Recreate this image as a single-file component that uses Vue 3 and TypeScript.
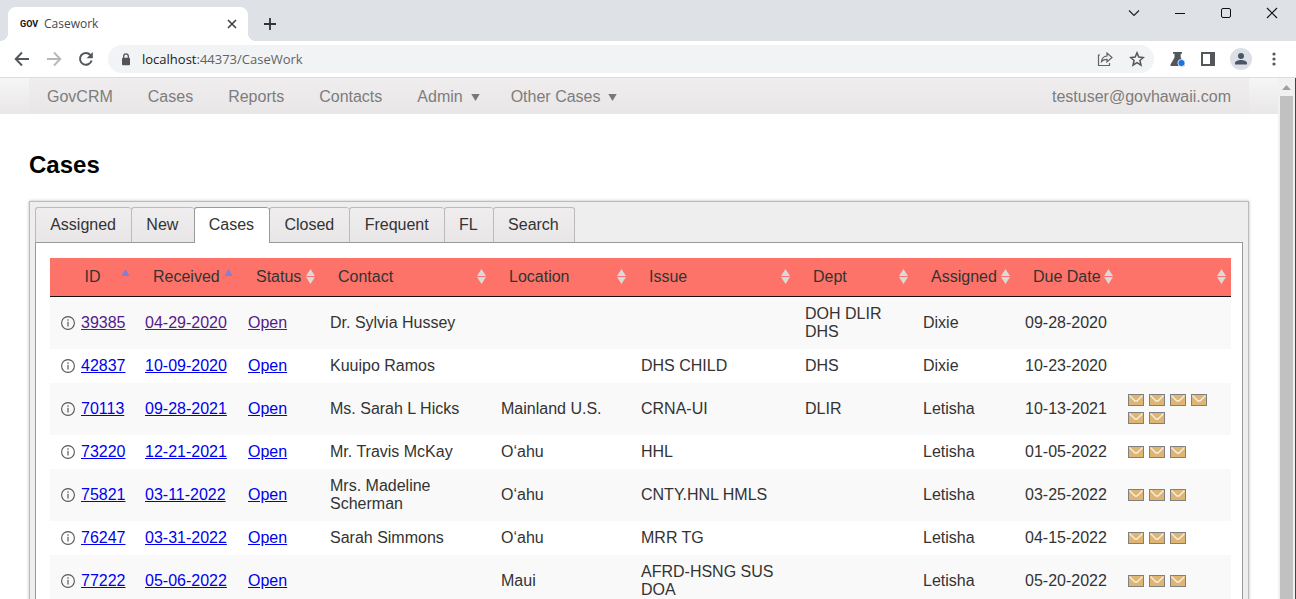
<script setup lang="ts">
import { ref } from 'vue'

interface CaseRow {
  id: string
  received: string
  visited?: boolean
  contact: string
  location: string
  issue: string
  dept: string
  assigned: string
  due: string
  mails: number
}

interface Column {
  label: string
  width: number
  sort: 'asc' | 'both'
  center?: boolean
}

const url = ref('localhost:44373/CaseWork')
const activeTab = ref('Cases')
const tabs: string[] = ['Assigned', 'New', 'Cases', 'Closed', 'Frequent', 'FL', 'Search']

const navItems: { label: string; menu?: boolean }[] = [
  { label: 'GovCRM' },
  { label: 'Cases' },
  { label: 'Reports' },
  { label: 'Contacts' },
  { label: 'Admin', menu: true },
  { label: 'Other Cases', menu: true },
]

const columns: Column[] = [
  { label: 'ID', width: 85, sort: 'asc', center: true },
  { label: 'Received', width: 103, sort: 'asc' },
  { label: 'Status', width: 82, sort: 'both' },
  { label: 'Contact', width: 171, sort: 'both' },
  { label: 'Location', width: 140, sort: 'both' },
  { label: 'Issue', width: 164, sort: 'both' },
  { label: 'Dept', width: 118, sort: 'both' },
  { label: 'Assigned', width: 102, sort: 'both' },
  { label: 'Due Date', width: 103, sort: 'both' },
  { label: '', width: 113, sort: 'both' },
]

const rows: CaseRow[] = [
  { id: '39385', received: '04-29-2020', visited: true, contact: 'Dr. Sylvia Hussey', location: '', issue: '', dept: 'DOH DLIR DHS', assigned: 'Dixie', due: '09-28-2020', mails: 0 },
  { id: '42837', received: '10-09-2020', contact: 'Kuuipo Ramos', location: '', issue: 'DHS CHILD', dept: 'DHS', assigned: 'Dixie', due: '10-23-2020', mails: 0 },
  { id: '70113', received: '09-28-2021', contact: 'Ms. Sarah L Hicks', location: 'Mainland U.S.', issue: 'CRNA-UI', dept: 'DLIR', assigned: 'Letisha', due: '10-13-2021', mails: 6 },
  { id: '73220', received: '12-21-2021', contact: 'Mr. Travis McKay', location: 'O‘ahu', issue: 'HHL', dept: '', assigned: 'Letisha', due: '01-05-2022', mails: 3 },
  { id: '75821', received: '03-11-2022', contact: 'Mrs. Madeline Scherman', location: 'O‘ahu', issue: 'CNTY.HNL HMLS', dept: '', assigned: 'Letisha', due: '03-25-2022', mails: 3 },
  { id: '76247', received: '03-31-2022', contact: 'Sarah Simmons', location: 'O‘ahu', issue: 'MRR TG', dept: '', assigned: 'Letisha', due: '04-15-2022', mails: 3 },
  { id: '77222', received: '05-06-2022', contact: '', location: 'Maui', issue: 'AFRD-HSNG SUS DOA', dept: '', assigned: 'Letisha', due: '05-20-2022', mails: 3 },
]
</script>

<template>
  <div class="window">
    <header class="titlebar">
      <div class="browser-tab">
        <span class="favicon">GOV</span>
        <span class="tab-title">Casework</span>
        <button class="icon-btn" aria-label="Close tab">
          <svg width="10" height="10" viewBox="0 0 10 10"><path d="M1 1l8 8M9 1l-8 8" stroke="#3c4043" stroke-width="1.6" /></svg>
        </button>
      </div>
      <button class="icon-btn new-tab" aria-label="New tab">
        <svg width="12" height="12" viewBox="0 0 12 12"><path d="M6 0v12M0 6h12" stroke="#303336" stroke-width="1.8" /></svg>
      </button>
      <div class="window-buttons">
        <button class="icon-btn" aria-label="Search tabs">
          <svg width="12" height="12" viewBox="0 0 12 12"><path d="M1 3.5l5 5 5-5" fill="none" stroke="#222" stroke-width="1.2" /></svg>
        </button>
        <button class="icon-btn" aria-label="Minimize">
          <svg width="12" height="12" viewBox="0 0 12 12"><path d="M1 6.5h10" stroke="#111" /></svg>
        </button>
        <button class="icon-btn" aria-label="Maximize">
          <svg width="12" height="12" viewBox="0 0 12 12"><rect x="1.5" y="1.5" width="9" height="9" rx="1.5" fill="none" stroke="#111" /></svg>
        </button>
        <button class="icon-btn" aria-label="Close">
          <svg width="12" height="12" viewBox="0 0 12 12"><path d="M1 1l10 10M11 1L1 11" stroke="#111" stroke-width="1.1" /></svg>
        </button>
      </div>
    </header>

    <div class="toolbar">
      <button class="icon-btn" aria-label="Back">
        <svg width="16" height="16" viewBox="0 0 16 16"><path d="M15 8H2M8 1.5L1.7 8 8 14.5" fill="none" stroke="#53575b" stroke-width="1.9" /></svg>
      </button>
      <button class="icon-btn" aria-label="Forward">
        <svg width="16" height="16" viewBox="0 0 16 16"><path d="M1 8h13M8 1.5L14.3 8 8 14.5" fill="none" stroke="#b6b8ba" stroke-width="1.9" /></svg>
      </button>
      <button class="icon-btn" aria-label="Reload">
        <svg width="16" height="16" viewBox="0 0 16 16"><path d="M13.6 9.4A5.9 5.9 0 1 1 12.4 4" fill="none" stroke="#53575b" stroke-width="2" /><path d="M14.8 1v6.2H8.6z" fill="#53575b" /></svg>
      </button>
      <div class="omnibox">
        <svg class="lock" width="10" height="13" viewBox="0 0 10 13"><rect x="1" y="4.8" width="8" height="7.4" rx="1" fill="#505458" /><path d="M2.7 5V3.2a2.3 2.3 0 0 1 4.6 0V5" fill="none" stroke="#505458" stroke-width="1.3" /></svg>
        <div class="address">
          <input v-model="url" class="address-input" aria-label="Address" type="text" />
          <div class="address-text" aria-hidden="true"><span class="host">localhost</span>:44373/CaseWork</div>
        </div>
        <button class="icon-btn" aria-label="Share">
          <svg width="16" height="16" viewBox="0 0 16 16"><path d="M3 4H1.500v10.500h11V12" fill="none" stroke="#5f6368" stroke-width="1.200" /><path d="M4.500 10.500c.4-3.400 2.100-5.300 5.500-5.500V2l5 4.500-5 4.500V8.300c-2.400-.1-4 .5-5.500 2.200z" fill="none" stroke="#5f6368" stroke-width="1.200" /></svg>
        </button>
        <button class="icon-btn" aria-label="Bookmark">
          <svg width="16" height="16" viewBox="0 0 16 16"><path d="M8 1.800l1.800 4.300 4.600.4-3.500 3 1.100 4.600L8 11.700l-4 2.400 1.100-4.600-3.500-3 4.600-.4z" fill="none" stroke="#53575b" stroke-width="1.500" /></svg>
        </button>
      </div>
      <div class="actions">
        <button class="icon-btn" aria-label="Experiments">
          <svg width="16" height="16" viewBox="0 0 16 16"><path d="M3 1h9v1.800h-1.300v3.700l4 7V15H.5v-1.500l4-7V2.800H3z" fill="#53575b" /><circle cx="11.500" cy="12" r="3.600" fill="#1a73e8" stroke="#fff" stroke-width=".8" /></svg>
        </button>
        <button class="icon-btn" aria-label="Side panel">
          <svg width="16" height="16" viewBox="0 0 16 16"><path d="M1 1h14v14H1zM3 3v10h7V3z" fill="#53575b" fill-rule="evenodd" /></svg>
        </button>
        <button class="icon-btn" aria-label="Profile">
          <svg width="22" height="22" viewBox="0 0 22 22"><circle cx="11" cy="11" r="11" fill="#dce0e6" /><circle cx="11" cy="8" r="3" fill="#4a5568" /><path d="M5 16.500v-1.500c0-2 3.500-3 6-3s6 1 6 3v1.500z" fill="#4a5568" /></svg>
        </button>
        <button class="icon-btn" aria-label="Menu">
          <svg width="16" height="16" viewBox="0 0 16 16"><g fill="#53575b"><circle cx="8" cy="3" r="1.600" /><circle cx="8" cy="8" r="1.600" /><circle cx="8" cy="13" r="1.600" /></g></svg>
        </button>
      </div>
    </div>

    <div class="viewport">
      <div class="page">
        <nav class="site-nav">
          <div class="nav-inner">
            <a v-for="item in navItems" :key="item.label" href="#" class="nav-link" :class="{ 'has-menu': item.menu }">
              {{ item.label }}
              <svg v-if="item.menu" class="caret" width="9" height="7" viewBox="0 0 9 7"><path d="M.3 0h8.400L4.500 7z" fill="#777" /></svg>
            </a>
            <a href="#" class="nav-link user">testuser@govhawaii.com</a>
          </div>
        </nav>

        <main class="content">
          <h1>Cases</h1>
          <section class="tab-box">
            <div class="tab-list" role="tablist">
              <button
                v-for="tab in tabs"
                :key="tab"
                role="tab"
                class="tab"
                :class="{ active: tab === activeTab }"
                :aria-selected="tab === activeTab"
                @click="activeTab = tab"
              >
                {{ tab }}
              </button>
            </div>
            <div class="panel" role="tabpanel">
              <table>
                <colgroup>
                  <col v-for="(col, i) in columns" :key="i" :style="{ width: col.width + 'px' }" />
                </colgroup>
                <thead>
                  <tr>
                    <th v-for="(col, i) in columns" :key="i" :class="{ center: col.center }" scope="col">
                      {{ col.label }}
                      <svg v-if="col.sort === 'asc'" class="sort" width="9" height="15" viewBox="0 0 9 15"><path d="M.5 7L4.500 0l4 7z" fill="#7f7fdc" /></svg>
                      <svg v-else class="sort" width="9" height="15" viewBox="0 0 9 15"><path d="M0 7L4.500 0 9 7zM0 8h9l-4.500 7z" fill="#dadada" /></svg>
                    </th>
                  </tr>
                </thead>
                <tbody>
                  <tr v-for="row in rows" :key="row.id" :class="{ visited: row.visited }">
                    <td class="id-cell">
                      <svg class="info" width="14" height="14" viewBox="0 0 14 14"><circle cx="7" cy="7" r="6.400" fill="none" stroke="#555" stroke-width="1.100" /><path d="M7 5.800v4.700M7 3.300v1.400" stroke="#666" stroke-width="1.300" /></svg>
                      <a href="#">{{ row.id }}</a>
                    </td>
                    <td><a href="#">{{ row.received }}</a></td>
                    <td><a href="#">Open</a></td>
                    <td>{{ row.contact }}</td>
                    <td>{{ row.location }}</td>
                    <td>{{ row.issue }}</td>
                    <td>{{ row.dept }}</td>
                    <td>{{ row.assigned }}</td>
                    <td>{{ row.due }}</td>
                    <td>
                      <div class="mails">
                        <svg v-for="n in row.mails" :key="n" width="16" height="12" viewBox="0 0 16 12"><rect x=".5" y=".5" width="15" height="11" fill="#deb573" stroke="#808080" /><path d="M1.500 1.500l5.500 5.500h2l5.500-5.500" fill="none" stroke="#f7efe2" stroke-width="1.400" /></svg>
                      </div>
                    </td>
                  </tr>
                </tbody>
              </table>
            </div>
          </section>
        </main>
      </div>
      <div class="scrollbar">
        <svg width="9" height="5" viewBox="0 0 9 5"><path d="M0 5L4.500 0 9 5z" fill="#a0a0a0" /></svg>
        <div class="thumb"></div>
      </div>
    </div>
  </div>
</template>

<style>
body {
  margin: 0;
  background: #fff;
}
</style>

<style scoped>
* {
  box-sizing: border-box;
}

.window {
  display: flex;
  flex-direction: column;
  height: 100vh;
  overflow: hidden;
  font: 16px/18px "Liberation Sans", Arial, sans-serif;
  color: #333;
}

svg {
  display: block;
  flex: none;
}

.icon-btn {
  display: flex;
  align-items: center;
  justify-content: center;
  padding: 0;
  border: 0;
  background: none;
}

.titlebar {
  display: flex;
  flex: none;
  height: 41px;
  padding: 0 1px 0 8px;
  background: #dee1e6;
}

.browser-tab {
  position: relative;
  display: flex;
  align-items: center;
  width: 240px;
  margin-top: 7px;
  padding: 0 11px 0 12px;
  border-radius: 8px 8px 0 0;
  background: #fff;
}

/* Concave feet on both sides of the active browser tab */
.browser-tab::before,
.browser-tab::after {
  content: "";
  position: absolute;
  bottom: 0;
  width: 8px;
  height: 8px;
}

.browser-tab::before {
  right: 100%;
  background: radial-gradient(circle at 0 0, transparent 8px, #fff 8px);
}

.browser-tab::after {
  left: 100%;
  background: radial-gradient(circle at 100% 0, transparent 8px, #fff 8px);
}

.favicon {
  width: 24px;
  font: bold 9px/16px Roboto, sans-serif;
  color: #111;
}

.tab-title {
  flex: 1;
  font: 12px/16px "Open Sans", sans-serif;
  color: #45494d;
}

.new-tab {
  width: 44px;
  margin-top: 7px;
}

.window-buttons {
  display: flex;
  height: 26px;
  margin-left: auto;
}

.window-buttons .icon-btn {
  width: 46px;
}

.toolbar {
  display: flex;
  flex: none;
  align-items: center;
  gap: 16px;
  height: 37px;
  padding: 0 14px;
  border-bottom: 1px solid #dadce0;
  background: #fff;
}

.omnibox {
  display: flex;
  flex: 1;
  align-items: center;
  gap: 16px;
  height: 28px;
  margin-left: -2px;
  padding: 0 9px 0 13px;
  border-radius: 14px;
  background: #f1f3f4;
}

.lock {
  margin-right: -5px;
}

.address {
  display: grid;
  flex: 1;
  font: 13px/18px "Open Sans", sans-serif;
}

.address-input,
.address-text {
  grid-area: 1 / 1;
}

.address-input {
  padding: 0;
  border: 0;
  outline: 0;
  background: none;
  font: inherit;
  color: transparent;
}

.address-text {
  color: #5f6368;
  pointer-events: none;
}

.host {
  color: #202124;
}

.actions {
  display: flex;
  align-items: center;
  gap: 14px;
}

.viewport {
  display: flex;
  flex: 1;
  min-height: 0;
  border-right: 1px solid #444;
  background: #fff;
}

.page {
  flex: 1;
  min-width: 0;
  overflow: hidden;
}

.site-nav {
  padding: 0 29px;
  background: linear-gradient(#f6f6f6, #e9e7e7);
}

.nav-inner {
  display: flex;
  align-items: center;
  height: 36px;
  padding: 2px 0 0 1px;
  background: linear-gradient(#efeded, #e9e6e7);
}

.nav-link {
  display: flex;
  align-items: center;
  padding: 0 18px 0 17px;
  color: #7d7d7d;
  text-decoration: none;
}

.has-menu {
  padding-right: 14px;
}

.caret {
  margin-left: 8px;
}

.user {
  margin-left: auto;
}

.content {
  padding: 36px 29px 0;
}

h1 {
  margin: 0;
  font-size: 24px;
  line-height: 30px;
  color: #000;
}

.tab-box {
  margin-top: 21px;
  padding: 5px;
  border: 1px solid #bbb;
  background: #eee;
  box-shadow: 0 0 3px #bbb;
}

.tab-list {
  display: flex;
  width: 540px;
}

.tab {
  flex: 1 0 auto;
  height: 35px;
  padding: 0 15px 0 14px;
  border: solid #bbb;
  border-width: 1px 0 0 1px;
  border-radius: 3px 3px 0 0;
  background: linear-gradient(#efeded, #e9e6e7);
  font: inherit;
  color: #333;
}

.tab:last-child {
  border-right-width: 1px;
}

.tab.active {
  z-index: 1;
  height: 36px;
  margin-bottom: -1px;
  padding-bottom: 1px;
  border-color: #999;
  background: #fff;
}

.tab.active + .tab {
  border-left-color: #999;
}

.panel {
  padding: 15px 11px 15px 14px;
  border: 1px solid #999;
  background: #fff;
}

table {
  width: 100%;
  border-spacing: 0;
  table-layout: fixed;
}

th {
  position: relative;
  height: 39px;
  padding: 0 18px;
  border-bottom: 1px solid #111;
  background: #fd7369;
  font-weight: normal;
  text-align: left;
  white-space: nowrap;
}

.center {
  text-align: center;
}

.sort {
  position: absolute;
  top: 11px;
  right: 5px;
}

td {
  padding: 8px 10px;
  vertical-align: middle;
}

tbody tr:nth-child(odd) {
  background: #f9f9f9;
}

td a {
  color: #00e;
}

.visited a {
  color: #551a8b;
}

.id-cell {
  white-space: nowrap;
}

.info {
  display: inline-block;
  margin: 0 6px 0 1px;
  vertical-align: -2px;
}

.mails {
  display: flex;
  flex-wrap: wrap;
  gap: 6px 5px;
  padding: 3px 0;
}

.scrollbar {
  display: flex;
  flex-direction: column;
  align-items: center;
  gap: 6px;
  width: 17px;
  padding: 7px 2px 0;
  background: #f1f1f1;
}

.thumb {
  flex: 1;
  width: 13px;
  background: #c1c1c1;
}
</style>
